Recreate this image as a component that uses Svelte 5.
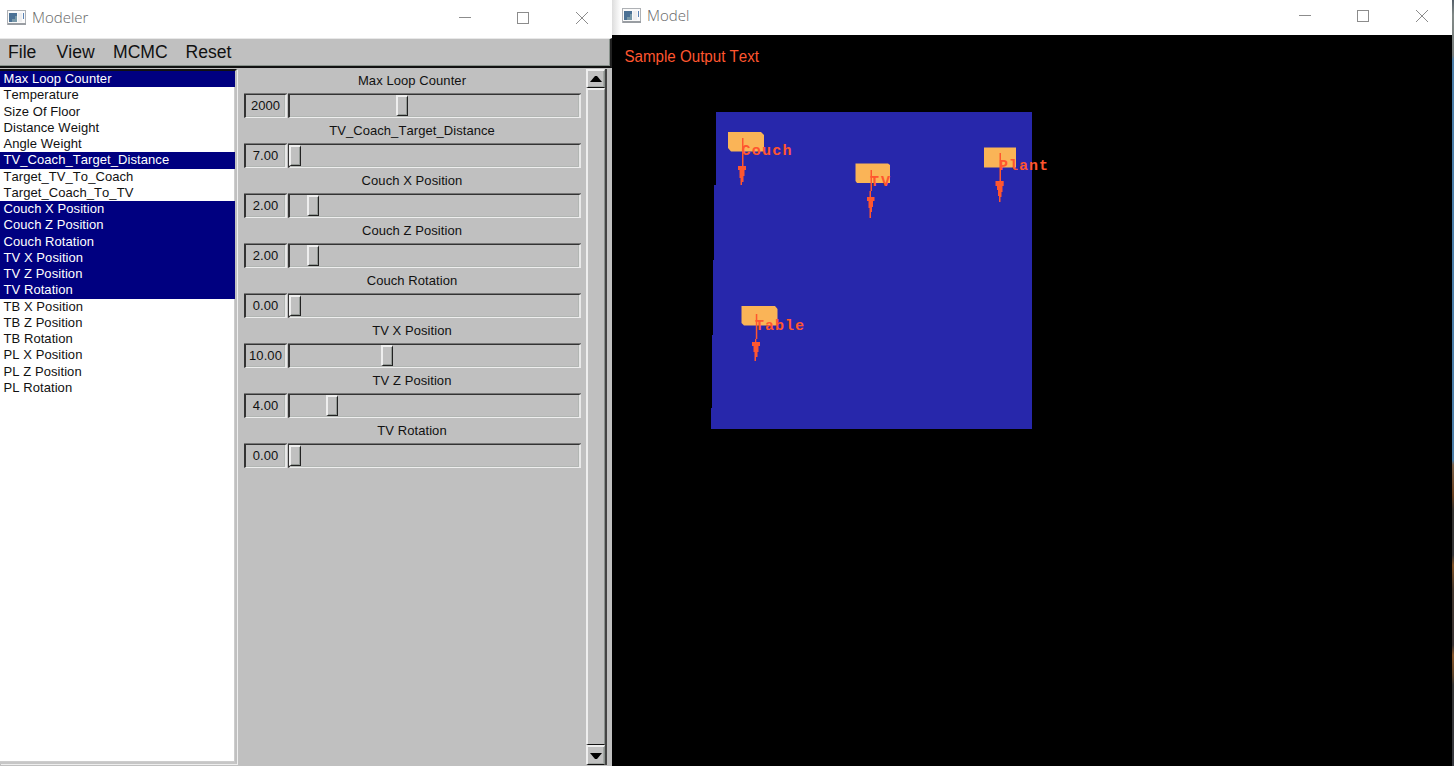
<script>
  const menus = [['File', 28.5], ['View', 36.5], ['MCMC', 52.5], ['Reset', 47]];
  const params = [
    ['Max Loop Counter', 1], ['Temperature', 0], ['Size Of Floor', 0], ['Distance Weight', 0],
    ['Angle Weight', 0], ['TV_Coach_Target_Distance', 1], ['Target_TV_To_Coach', 0],
    ['Target_Coach_To_TV', 0], ['Couch X Position', 1], ['Couch Z Position', 1],
    ['Couch Rotation', 1], ['TV X Position', 1], ['TV Z Position', 1], ['TV Rotation', 1],
    ['TB X Position', 0], ['TB Z Position', 0], ['TB Rotation', 0], ['PL X Position', 0],
    ['PL Z Position', 0], ['PL Rotation', 0]
  ];
  const sliders = [
    ['Max Loop Counter', '2000', 107], ['TV_Coach_Target_Distance', '7.00', 0],
    ['Couch X Position', '2.00', 18], ['Couch Z Position', '2.00', 18],
    ['Couch Rotation', '0.00', 0], ['TV X Position', '10.00', 92],
    ['TV Z Position', '4.00', 37], ['TV Rotation', '0.00', 0]
  ];
</script>

{#snippet appIcon()}
  <svg class="app" width="19" height="15" viewBox="0 0 19 15" shape-rendering="crispEdges">
    <rect x=".5" y=".5" width="18" height="14" fill="#fafafa" stroke="#aeb1b5" />
    <rect x="1" y="13" width="18" height="2" fill="#999da2" />
    <rect x="2" y="3" width="8" height="9" fill="#4b7195" />
    <path d="M5 12V9h3V6h2v6z" fill="#7898a8" />
    <rect x="11" y="3" width="4" height="9" fill="#eeeeef" />
    <rect x="16" y="3" width="1" height="6" fill="#5b83b4" />
  </svg>
{/snippet}

{#snippet controls()}
  <div class="controls">
    <svg width="12" height="12"><path d="M0 5.5H12" stroke="#8c8c8c" /></svg>
    <svg width="12" height="12"><rect x=".5" y=".5" width="11" height="11" fill="none" stroke="#8c8c8c" /></svg>
    <svg width="12" height="12"><path d="M0 0L12 12M12 0L0 12" stroke="#8c8c8c" /></svg>
  </div>
{/snippet}

<div class="desktop">
  <section class="modeler">
    <header class="title">{@render appIcon()}<span>Modeler</span>{@render controls()}</header>
    <nav>
      {#each menus as [name, width]}<span style:width="{width}px">{name}</span>{/each}
    </nav>
    <div class="content">
      <ul>
        {#each params as [name, selected]}<li class:selected={selected}>{name}</li>{/each}
      </ul>
      <div class="sliders">
        {#each sliders as [name, value, position]}
          <div class="item">
            <label>{name}</label>
            <div class="line">
              <div class="value">{value}</div>
              <div class="track"><i style:margin-left="{position - 1}px"></i></div>
            </div>
          </div>
        {/each}
      </div>
      <div class="scroll">
        <div class="button"><svg width="12" height="6"><path d="M0 6L5 0H7L12 6z" /></svg></div>
        <div class="thumb"></div>
        <div class="button down"><svg width="12" height="6"><path d="M0 0H12L7 6H5z" /></svg></div>
      </div>
    </div>
  </section>

  <section class="model">
    <header class="title">{@render appIcon()}<span>Model</span>{@render controls()}</header>
    <div class="scene">
      <svg width="840" height="731" viewBox="612 35 840 731">
        <path fill="#2727ab" shape-rendering="crispEdges" d="M715.5 112H1032V429H710.5V408H711.5V335H712.5V260H713.5V185H715.5z" />
        <g fill="#fab457">
          <path d="M728 132H761L764 135V151.5H731L728 148z" />
          <path d="M855.5 163.5H888L890 165V183H857L855.5 181z" />
          <path d="M984 147.5H1016V167.5H984z" />
          <path d="M741.5 306H775L777.5 309V325.5H744L741.5 323z" />
        </g>
        <g fill="#ff562f">
          <path d="M742 138H743.5V166H746V170H744.5V176H743.5V182H742V185H740.5V178H739.5V170H738V166H742z" />
          <path d="M870.5 170H872V191H871V197H874.5V201H873V207H872V212H871V218H869.5V208H868.5V201H867V197H869.5V191H870.5z" />
          <path d="M999.5 153H1001V181H1003.7V186H1002.5V192H1001.5V197H1000.5V202H999V196H998V190H997V186H995.5V181H999.5z" />
          <path d="M755.8 314H757.3V339H756.3V342H760V346H758.5V352H757.5V357H756V361H754.5V352H753.5V346H752V342H755V339H755.8z" />
        </g>
        <g class="tags">
          <text x="741.5" y="154.5" textLength="50">Couch</text>
          <text x="870" y="185.5" textLength="20">TV</text>
          <text x="999" y="169.5" textLength="49">Plant</text>
          <text x="755" y="329.5" textLength="49">Table</text>
        </g>
        <text class="output" x="624.5" y="61.5" textLength="134.5" lengthAdjust="spacingAndGlyphs">Sample Output Text</text>
      </svg>
    </div>
  </section>
  <div class="edge"></div>
</div>

<style>
  :global(body) { margin: 0; overflow: hidden; }
  .desktop { display: flex; width: 1454px; height: 766px; background: #000; font-family: "Liberation Sans", Arial, sans-serif; font-kerning: none; }
  .desktop * { box-sizing: border-box; }
  section { display: flex; flex-direction: column; height: 766px; }
  .modeler { width: 612px; background: #c0c0c0; }
  .model { width: 840px; }
  .edge { width: 2px; background: linear-gradient(#555f68 0, #818987 15px, #777d7c 55px, #4b7ea9 60px, #4b7ea9 460px, #7b624b 465px, #69401f 495px, #34322f 510px, #343436 555px, #805225 565px, #42362d 590px, #383232 645px, #86562a 655px, #5e442a 675px, #343434 685px, #383a40); }
  .title { display: flex; align-items: center; background: #fff; font: 15px "Open Sans", sans-serif; font-weight: 300; color: #666; flex: none; height: 35px; padding: 0 24px 4px 10px; }
  .model .title { background: linear-gradient(90deg, #ddd, #fff 9px); }
  .modeler .title { height: 38px; padding: 0 24px 3px 7px; }
  .title span { margin-left: 6px; padding-bottom: 1px; }
  .app, .controls svg { display: block; flex: none; }
  .app { margin-bottom: 1px; }
  .controls { margin-left: auto; display: flex; }
  .controls svg { margin-left: 46px; }
  .controls svg:last-child { margin-left: 47px; }
  .modeler .controls { padding-top: 1px; }
  nav { flex: none; height: 30px; display: flex; gap: 20px; padding: 0 8px; font-size: 17.6px; line-height: 27px; color: #111; border: solid; border-width: 1px 2px 2px 0; border-color: #e8e8e8 #222 #111 #ddd; box-shadow: inset -1px -1px #87918b; }
  nav span { white-space: nowrap; }
  .content { flex: 1; min-height: 0; display: flex; padding-top: 1px; }
  ul { width: 237px; height: 695px; margin: 0; padding: 0; list-style: none; background: #fff; border-style: solid; border-width: 2px 2px 2px 0; border-color: #111 #c0c0c0 #c6c6c6; box-shadow: inset -1px -1px #ccc, 1px 1px #eee; }
  li { width: 235px; height: 16.25px; padding-left: 3.5px; font-size: 13px; line-height: 16.3px; letter-spacing: .07px; color: #111; white-space: nowrap; }
  .selected { background: #000080; color: #fff; }
  .sliders { width: 349px; padding-left: 7px; }
  .item { height: 50px; }
  label { display: block; width: 336px; height: 25px; line-height: 24px; text-align: center; font-size: 13px; letter-spacing: .07px; color: #111; }
  .line { display: flex; gap: 1px; }
  .value, .track { height: 24px; border: solid; border-width: 1px 2px 1px 2px; border-color: #333 #e8e8e8 #eee #333; box-shadow: inset -1px -1px #b2b6b3, 0 -1px #777; }
  .value { width: 43px; text-align: center; font-size: 13px; line-height: 21px; letter-spacing: .07px; color: #111; }
  .track { width: 293px; }
  .track i { display: block; width: 12px; height: 21px; border: solid; border-width: 2px 1px 1px 2px; border-color: #eee #222 #222 #eee; box-shadow: inset -1px -1px #929894; }
  .scroll { width: 21px; height: 696px; display: flex; flex-direction: column; border-right: 2px solid #444; }
  .button, .thumb { border: solid; border-width: 2px 1px 1px 2px; border-color: #eee #8a908d #111 #eee; }
  .button { flex: none; height: 19px; display: flex; align-items: center; justify-content: center; box-shadow: inset -1px -1px #a2a6a3; }
  .down { height: 20px; }
  .thumb { flex: 1; }
  .button path { fill: #000; }
  .scene { flex: 1; background: #000; }
  .scene svg { display: block; }
  .tags { font: bold 15px "Liberation Mono", "Courier New", monospace; fill: #ff562f; }
  .output { font-size: 16px; fill: #ff562f; }
</style>
